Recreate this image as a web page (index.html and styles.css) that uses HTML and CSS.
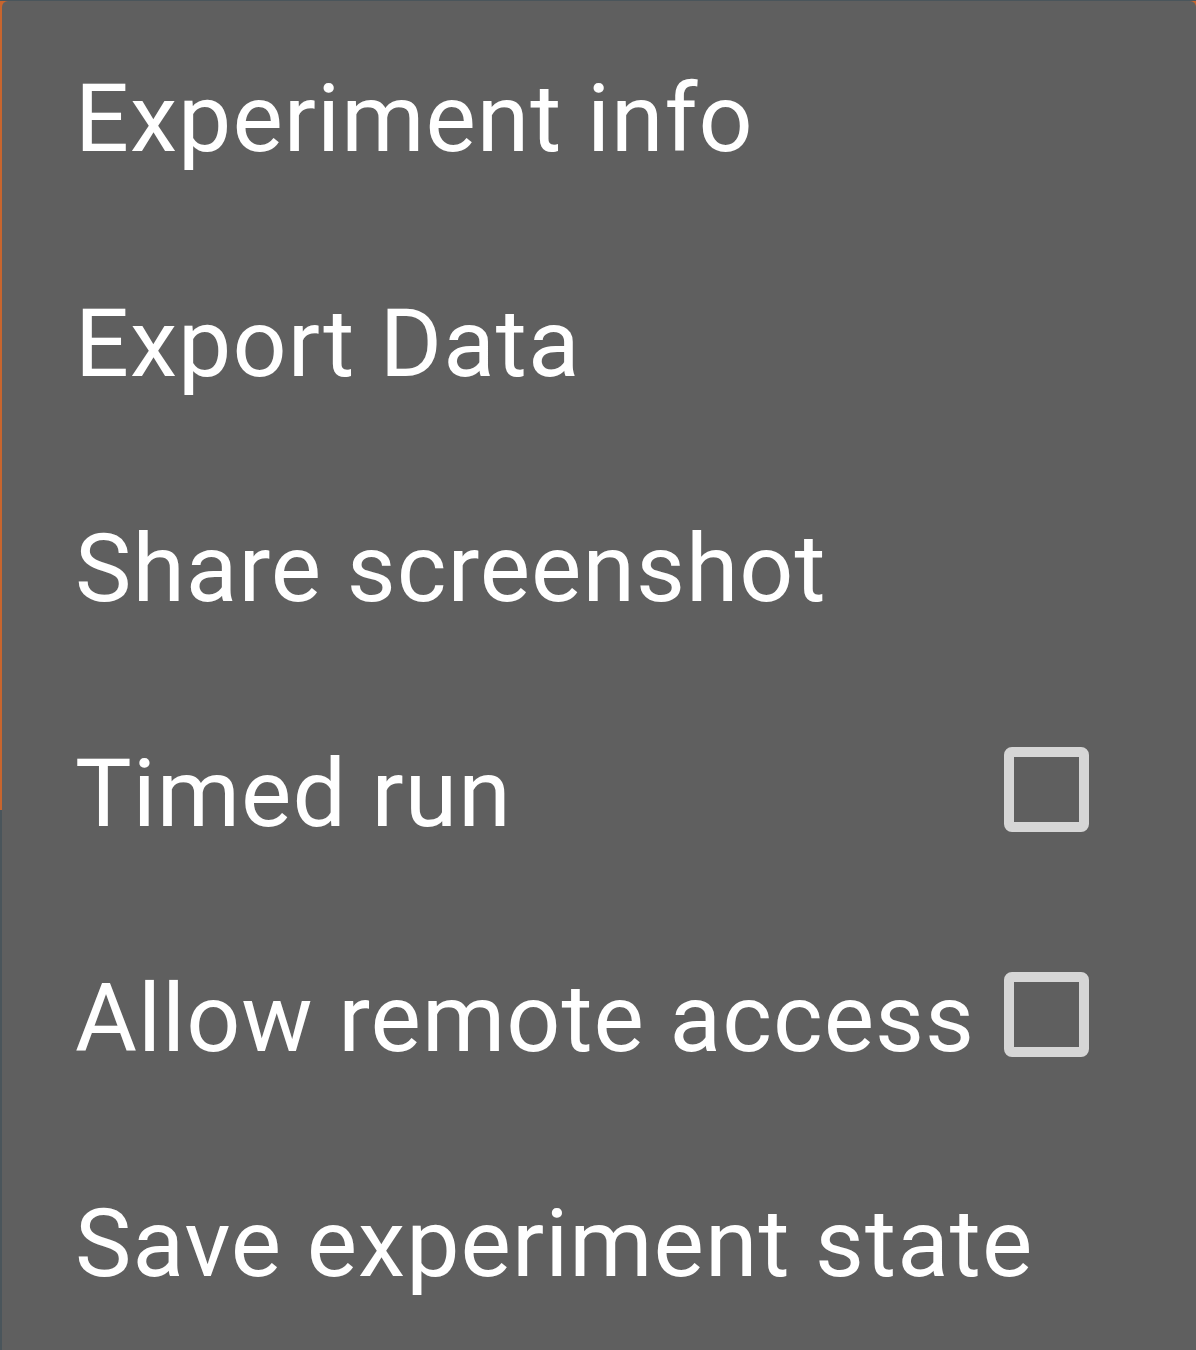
FILE: index.html
```html
<!DOCTYPE html>
<html>
<head>
<meta charset="utf-8">
<link rel="stylesheet" href="styles.css">
</head>
<body>
<div class="menu">
  <div class="item"><span class="label">Experiment info</span></div>
  <div class="item"><span class="label">Export Data</span></div>
  <div class="item"><span class="label">Share screenshot</span></div>
  <div class="item"><span class="label">Timed run</span><span class="check"></span></div>
  <div class="item"><span class="label">Allow remote access</span><span class="check"></span></div>
  <div class="item"><span class="label">Save experiment state</span></div>
</div>
</body>
</html>
```

FILE: styles.css
```css
html, body {
  margin: 0;
  padding: 0;
}
body {
  width: 1196px;
  height: 1350px;
  overflow: hidden;
  background:
    linear-gradient(to bottom, #4a555b 0, #4a555b 1px, transparent 1px),
    linear-gradient(to bottom, #c8652e 0, #c8652e 60%, #4a555b 60%, #4a555b 100%);
}
.menu {
  margin: 1px 0 0 2px;
  height: 1349px;
  background: #5f5f5f;
  border-radius: 6px 6px 0 0;
  padding-top: 5px;
  box-sizing: border-box;
  font-family: Roboto, "Noto Sans", sans-serif;
  font-size: 95px;
  letter-spacing: 1px;
  color: #ffffff;
}
.item {
  height: 225px;
  line-height: 225px;
  display: flex;
  align-items: center;
  justify-content: space-between;
  padding: 0 107px 0 73px;
  white-space: nowrap;
}
.check {
  width: 65px;
  height: 65px;
  border: 10px solid #d6d6d6;
  border-radius: 8px;
  margin-top: -8px;
  flex: none;
}
```
